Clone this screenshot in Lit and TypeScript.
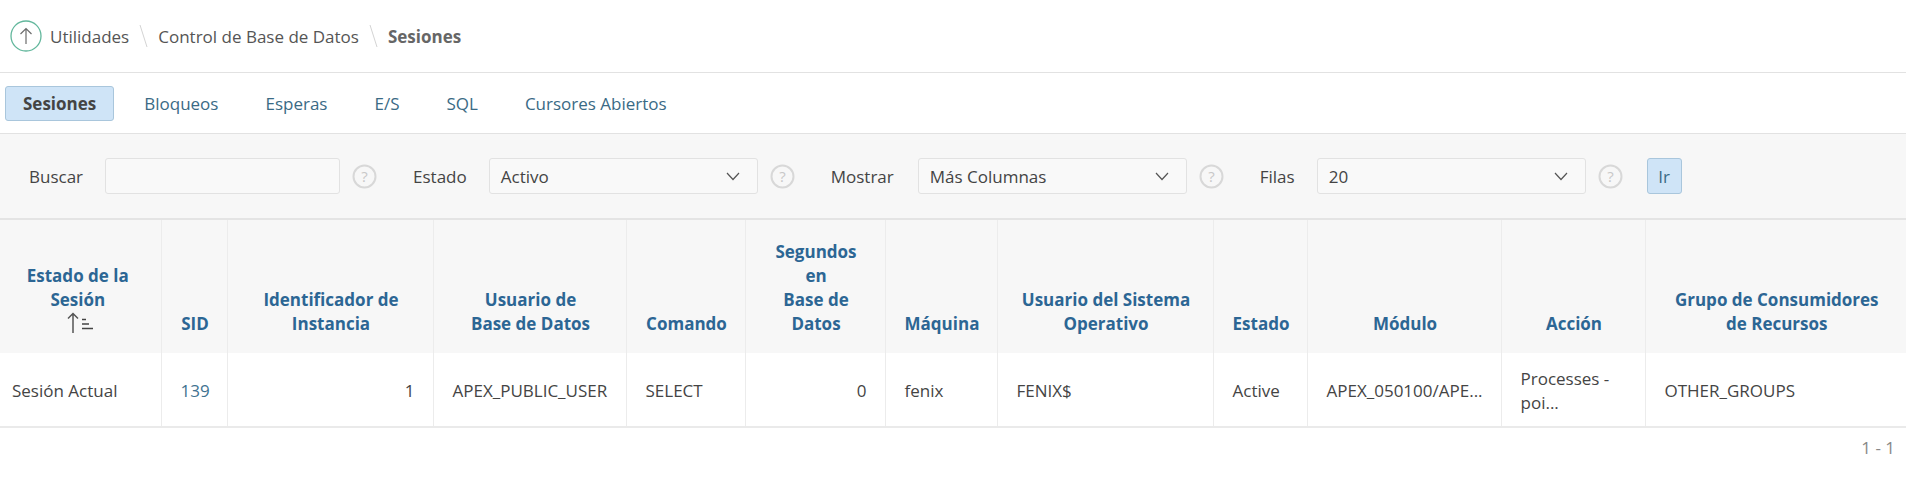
import { LitElement, html, css, svg } from "lit";
import { customElement } from "lit/decorators.js";

const widths = [161, 66, 206, 193, 119, 140, 112, 216, 94, 194, 144, 261];
const help = html`<svg class="help" width="25" height="25" viewBox="0 0 25 25" fill="none"><circle cx="12.5" cy="12.5" r="11" stroke="#d8d8d8" stroke-width="2"/><text x="12.5" y="18" text-anchor="middle" font-size="15" font-family="Open Sans" fill="#c8c8c8">?</text></svg>`;
const chevron = html`<svg width="14" height="9" viewBox="0 0 14 9" fill="none"><path d="M1 1l6 6.5L13 1" stroke="#555" stroke-width="1.2"/></svg>`;
const sep = html`<svg class="sep" viewBox="0 0 9 22"><path d="M1 0l7 22" stroke="#d4d4d4"/></svg>`;

@customElement("app-root")
export class AppRoot extends LitElement {
  static styles = css`
    :host { display: block; width: 1906px; height: 490px; overflow: hidden; background: #fff; font: 17px/24px "Open Sans", sans-serif; color: #444; }
    .crumbs { height: 73px; box-sizing: border-box; display: flex; align-items: center; padding-left: 10px; border-bottom: 1px solid #e2e2e2; }
    .up { width: 32px; height: 32px; margin-right: 8px; flex: none; }
    .crumb { color: #555; padding-top: 2px; }
    .crumb.cur { font-weight: 700; color: #666; }
    .sep { width: 9px; height: 22px; margin: 0 10px; flex: none; }
    .tabs { height: 61px; box-sizing: border-box; display: flex; align-items: center; gap: 13px; padding-left: 5px; border-bottom: 1px solid #e2e2e2; }
    .tab { height: 35px; box-sizing: border-box; padding: 2px 16px 0; display: flex; align-items: center; color: #3a6a85; border: 1px solid transparent; border-radius: 3px; }
    .tab.on { padding: 2px 17px 0; background: #cfe4f7; border-color: #a9c6dc; color: #444; font-weight: 700; }
    .filters { height: 86px; box-sizing: border-box; background: #f7f7f7; border-bottom: 2px solid #e4e4e4; display: flex; align-items: center; padding-left: 29px; }
    .lab { margin-right: 22px; padding-top: 1px; }
    .lab.wide { margin-right: 24px; }
    .field { height: 36px; box-sizing: border-box; background: #f9f9f9; border: 1px solid #e2e2e2; border-radius: 3px; display: flex; align-items: center; justify-content: space-between; padding: 1px 17px 0 11px; }
    .input { width: 235px; }
    .select { width: 269px; }
    .help { margin: 0 36px 0 12px; flex: none; }
    .go { width: 35px; height: 36px; box-sizing: border-box; padding-top: 1px; background: #cfe4f7; border: 1px solid #a9c6dc; border-radius: 3px; display: flex; align-items: center; justify-content: center; color: #3a6a85; margin-left: -12px; }
    table { border-collapse: collapse; table-layout: fixed; width: 1906px; }
    th { background: #f7f7f7; color: #2c6694; font-weight: 700; text-align: center; vertical-align: bottom; height: 133px; box-sizing: border-box; padding: 20px 7px 17px 9px; }
    th:first-child { padding-left: 4px; padding-right: 9px; }
    td { height: 74px; box-sizing: border-box; padding: 2px 18px 0 19px; border-bottom: 2px solid #eaeaea; }
    td:first-child { padding-left: 12px; }
    th + th, td + td { border-left: 1px solid #ececec; }
    td.num { text-align: right; padding-right: 18px; }
    td.c { text-align: center; }
    a { color: #3f7391; text-decoration: none; }
    .sort { display: block; margin: 0 auto; overflow: visible; }
    .pager { text-align: right; padding: 8px 11px 0 0; color: #888; }
  `;

  render() {
    return html`
      <nav class="crumbs">
        <svg class="up" viewBox="0 0 32 32" fill="none"><circle cx="16" cy="16" r="15" stroke="#62b79c" stroke-width="1.3"/><path d="M16 24V8.5M10.5 14L16 8.5l5.5 5.5" stroke="#6c6c6c" stroke-width="1.2"/></svg>
        <span class="crumb">Utilidades</span>
        ${sep}
        <span class="crumb">Control de Base de Datos</span>
        ${sep}
        <span class="crumb cur">Sesiones</span>
      </nav>
      <div class="tabs">
        <span class="tab on">Sesiones</span>
        ${["Bloqueos", "Esperas", "E/S", "SQL", "Cursores Abiertos"].map((t) => html`<span class="tab">${t}</span>`)}
      </div>
      <div class="filters">
        <span class="lab">Buscar</span><div class="field input"></div>${help}
        <span class="lab">Estado</span><div class="field select"><span>Activo</span>${chevron}</div>${help}
        <span class="lab wide">Mostrar</span><div class="field select"><span>Más Columnas</span>${chevron}</div>${help}
        <span class="lab">Filas</span><div class="field select"><span>20</span>${chevron}</div>${help}
        <div class="go">Ir</div>
      </div>
      <table>
        <colgroup>${widths.map((w) => html`<col style="width:${w}px" />`)}</colgroup>
        <thead>
          <tr>
            <th>Estado de la<br />Sesión
              <svg class="sort" width="24" height="24" viewBox="0 0 24 24" fill="none"><path d="M7 21V1.5M2 6.5L7 1.5l5 5" stroke="#555" stroke-width="1.5"/>${svg`<path d="M16 7.5h4M16 12h7M16 16.5h11" stroke="#444" stroke-width="1.4"/>`}</svg>
            </th>
            <th>SID</th>
            <th>Identificador de<br />Instancia</th>
            <th>Usuario de<br />Base de Datos</th>
            <th>Comando</th>
            <th>Segundos<br />en<br />Base de<br />Datos</th>
            <th>Máquina</th>
            <th>Usuario del Sistema<br />Operativo</th>
            <th>Estado</th>
            <th>Módulo</th>
            <th>Acción</th>
            <th>Grupo de Consumidores<br />de Recursos</th>
          </tr>
        </thead>
        <tbody>
          <tr>
            <td>Sesión Actual</td>
            <td class="c"><a href="#">139</a></td>
            <td class="num">1</td>
            <td>APEX_PUBLIC_USER</td>
            <td>SELECT</td>
            <td class="num">0</td>
            <td>fenix</td>
            <td>FENIX$</td>
            <td>Active</td>
            <td>APEX_050100/APE...</td>
            <td>Processes - poi...</td>
            <td>OTHER_GROUPS</td>
          </tr>
        </tbody>
      </table>
      <div class="pager">1 - 1</div>
    `;
  }
}
